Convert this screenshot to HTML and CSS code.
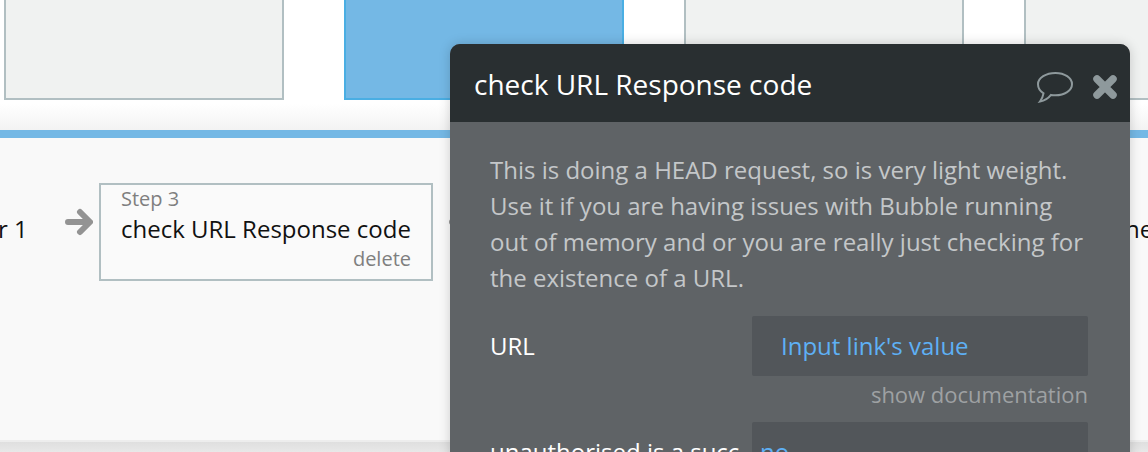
FILE: index.html
```html
<!DOCTYPE html>
<html lang="en">
<head>
<meta charset="utf-8">
<title>check URL Response code</title>
<link rel="stylesheet" href="styles.css">
</head>
<body>
<div class="page">
  <div class="tiles">
    <div class="tile"></div>
    <div class="tile tile-active"></div>
    <div class="tile"></div>
    <div class="tile"></div>
  </div>
  <section class="workflow">
    <div class="step-row">
      <span class="prev-label">r 1</span>
      <svg class="arrow" width="28" height="28" viewBox="0 0 28 28"><path d="M3 14H23M15 4 25 14 15 24" fill="none" stroke="#939393" stroke-width="6" stroke-linecap="round" stroke-linejoin="round"/></svg>
      <div class="step">
        <div class="step-num">Step 3</div>
        <div class="step-name">check URL Response code</div>
        <div class="step-del">delete</div>
      </div>
      <svg class="arrow arrow-next" width="28" height="28" viewBox="0 0 28 28"><path d="M3 14H23M15 4 25 14 15 24" fill="none" stroke="#939393" stroke-width="6" stroke-linecap="round" stroke-linejoin="round"/></svg>
    </div>
    <span class="next-label">ne</span>
  </section>
  <aside class="panel">
    <header class="panel-head">
      <h1 class="panel-title">check URL Response code</h1>
      <svg class="comment" width="36" height="32" viewBox="0 0 36 32"><path d="M18.500 2C27.500 2 35 6.800 35 13.200C35 19.500 27.500 24.300 18.500 24.300C17 24.300 15.500 24.200 14 23.900C12 26.500 8.500 29.500 3 30.500C5 28 6 25.300 6.500 22.300C3 20 1 16.800 1 13.200C1 6.800 9 2 18.500 2Z" fill="none" stroke="#8e999c" stroke-width="2"/></svg>
      <svg class="close" width="26" height="26" viewBox="0 0 26 26"><path d="M5 5 21 21M21 5 5 21" stroke="#8e999c" stroke-width="7.500" stroke-linecap="round"/></svg>
    </header>
    <div class="panel-body">
      <p class="panel-desc">This is doing a HEAD request, so is very light weight. Use it if you are having issues with Bubble running out of memory and or you are really just checking for the existence of a URL.</p>
      <div class="field">
        <label class="field-label">URL</label>
        <div class="field-value">Input link's value</div>
      </div>
      <div class="doc-link">show documentation</div>
      <div class="field field-second">
        <label class="field-label">unauthorised is a succ</label>
        <div class="field-value field-value-tight">no</div>
      </div>
    </div>
  </aside>
</div>
</body>
</html>
```
FILE: styles.css
```css
* { box-sizing: border-box; }
html, body { margin: 0; padding: 0; }
body {
  width: 1148px;
  height: 452px;
  overflow: hidden;
  background: #fff;
  font-family: "Open Sans", "Liberation Sans", sans-serif;
}
.page {
  position: relative;
  width: 1148px;
  height: 452px;
  overflow: hidden;
  background: linear-gradient(to bottom, #dfdfdf 442px, #e8e8e8 452px);
}
.tiles {
  display: flex;
  gap: 60px;
  height: 130px;
  padding-left: 4px;
  background: linear-gradient(to bottom, #fff 0, #fff 104px, #f3f3f3 130px);
  overflow: hidden;
}
.tile {
  flex: 0 0 280px;
  height: 100px;
  background: #f0f2f1;
  border: 2px solid #b1bfc2;
  border-top: 0;
}
.tile-active {
  background: #74b8e5;
  border-color: #4aaee3;
}
.workflow {
  position: relative;
  height: 312px;
  padding-top: 45px;
  background: #f9f9f9;
  border-top: 8px solid #74b8e5;
  border-bottom: 2px solid #ededed;
}
.step-row {
  display: flex;
  align-items: flex-start;
}
.prev-label {
  width: 66px;
  margin-left: -1px;
  padding-top: 29px;
  font-size: 24px;
  line-height: 34px;
  color: #111;
  white-space: nowrap;
  text-indent: -1px;
}
.arrow {
  flex: none;
  margin-top: 25px;
  margin-right: 6px;
}
.arrow-next { margin-left: 16px; }
.step {
  flex: none;
  width: 334px;
  height: 98px;
  padding: 3px 20px 0 20px;
  border: 2px solid #b1bfc2;
  background: #fafafa;
}
.step-num {
  font-size: 20px;
  line-height: 22px;
  color: #7f7f7f;
}
.step-name {
  margin-top: 2px;
  font-size: 24px;
  line-height: 34px;
  color: #111;
  white-space: nowrap;
}
.step-del {
  margin-top: 1px;
  font-size: 20px;
  line-height: 24px;
  text-align: right;
  color: #7f7f7f;
}
.next-label {
  position: absolute;
  left: 1125px;
  top: 74px;
  font-size: 24px;
  line-height: 34px;
  color: #111;
}
.panel {
  position: absolute;
  left: 450px;
  top: 44px;
  width: 680px;
  height: 420px;
  border-radius: 10px 10px 0 0;
  background: #5f6366;
  box-shadow: 0 0 12px rgba(0, 0, 0, .18);
  overflow: hidden;
}
.panel-head {
  display: flex;
  align-items: center;
  height: 78px;
  padding: 0 12px 0 24px;
  background: #292f31;
}
.panel-title {
  flex: 1;
  margin: 2px 0 0;
  font-size: 28px;
  font-weight: 400;
  color: #fff;
  white-space: nowrap;
}
.comment { margin-top: 8px; margin-right: 19px; }
.close { margin-top: 8px; }
.panel-body { padding: 30px 42px 0 40px; }
.panel-desc {
  margin: 0;
  font-size: 24px;
  line-height: 36px;
  color: #c4c7c9;
}
.field {
  display: flex;
  align-items: center;
  margin-top: 20px;
}
.field-label {
  flex: 0 0 262px;
  margin-top: -2px;
  font-size: 24px;
  color: #fff;
  white-space: nowrap;
  overflow: hidden;
}
.field-value {
  flex: 1;
  height: 60px;
  padding: 0 29px;
  font-size: 24px;
  line-height: 60px;
  color: #5eb0f5;
  background: #52565a;
  border-radius: 2px;
}
.field-value-tight { padding: 0 8px; }
.doc-link {
  margin-top: 2px;
  font-size: 22px;
  line-height: 32px;
  text-align: right;
  color: #9ea1a3;
}
.field-second { margin-top: 12px; align-items: flex-start; }
.field-second .field-label { margin-top: 0; line-height: 60px; }
```
